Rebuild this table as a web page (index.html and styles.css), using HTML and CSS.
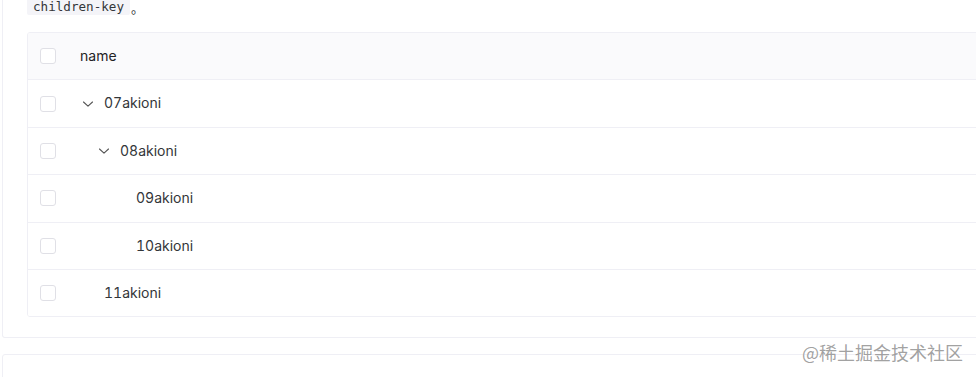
FILE: index.html
```html
<!DOCTYPE html>
<html lang="zh">
<head>
<meta charset="utf-8">
<link rel="stylesheet" href="styles.css">
</head>
<body>
<div class="page">
  <section class="card first">
    <p class="desc"><code class="code">children-key</code><span class="dot">。</span></p>
    <div class="table">
      <div class="row head">
        <div class="cell check"><span class="box"></span></div>
        <div class="cell name">name</div>
      </div>
      <div class="row">
        <div class="cell check"><span class="box"></span></div>
        <div class="cell name"><span class="indent l0"></span><span class="toggle"><svg viewBox="0 0 16 16" width="16" height="16"><path d="M3.5 6 L8 10.2 L12.5 6" fill="none" stroke="#555" stroke-width="1.1" stroke-linecap="round" stroke-linejoin="round"/></svg></span>07akioni</div>
      </div>
      <div class="row">
        <div class="cell check"><span class="box"></span></div>
        <div class="cell name"><span class="indent l1"></span><span class="toggle"><svg viewBox="0 0 16 16" width="16" height="16"><path d="M3.5 6 L8 10.2 L12.5 6" fill="none" stroke="#555" stroke-width="1.1" stroke-linecap="round" stroke-linejoin="round"/></svg></span>08akioni</div>
      </div>
      <div class="row">
        <div class="cell check"><span class="box"></span></div>
        <div class="cell name"><span class="indent l2"></span><span class="toggle"></span>09akioni</div>
      </div>
      <div class="row">
        <div class="cell check"><span class="box"></span></div>
        <div class="cell name"><span class="indent l2"></span><span class="toggle"></span>10akioni</div>
      </div>
      <div class="row last">
        <div class="cell check"><span class="box"></span></div>
        <div class="cell name"><span class="indent l0"></span><span class="toggle"></span>11akioni</div>
      </div>
    </div>
  </section>
  <section class="card second"></section>
  <div class="watermark">@稀土掘金技术社区</div>
</div>
</body>
</html>
```
FILE: styles.css
```css
html, body {
  margin: 0;
  padding: 0;
  background: #fff;
  overflow: hidden;
}
body {
  width: 976px;
  height: 377px;
  font-family: Inter, "Noto Sans", "Noto Sans CJK SC", sans-serif;
  font-size: 14px;
  color: rgb(51, 54, 57);
  font-variant-numeric: tabular-nums;
}
.page {
  position: relative;
  width: 976px;
  height: 377px;
  overflow: hidden;
}
.card {
  margin-left: 2px;
  width: 1100px;
  border: 1px solid #efeff5;
  border-radius: 3px;
  box-sizing: border-box;
}
.card.first {
  border-top: none;
  border-radius: 0 0 3px 3px;
  padding: 0 24px 20px 24px;
}
.card.second {
  margin-top: 16px;
  height: 60px;
}
.desc {
  margin: 0 0 17px 0;
  height: 15px;
  line-height: 15px;
  display: flex;
  align-items: flex-start;
}
.code {
  display: block;
  font-family: "DejaVu Sans Mono", "Liberation Mono", monospace;
  font-size: 12.6px;
  line-height: 14px;
  height: 15px;
  padding: 0 6px 0 6px;
  background: #f4f4f8;
  color: rgb(51, 54, 57);
  border-radius: 0 0 2px 2px;
}
.dot {
  display: block;
  font-family: "Noto Sans CJK SC", sans-serif;
  font-size: 13px;
  line-height: 15px;
  margin-left: 1px;
  color: rgb(51, 54, 57);
}
.table {
  border: 1px solid #efeff5;
  border-radius: 3px;
  overflow: hidden;
}
.row {
  display: flex;
  border-bottom: 1px solid #efeff5;
  background: #fff;
}
.row.last {
  border-bottom: none;
}
.row.head {
  background: #fafafc;
}
.row.head .name {
  font-weight: 400;
  color: rgb(31, 34, 37);
}
.cell {
  padding: 12px;
  line-height: 22.4px;
  display: flex;
  align-items: center;
}
.cell.check {
  width: 16px;
  flex: none;
}
.box {
  width: 16px;
  height: 16px;
  box-sizing: border-box;
  border: 1px solid #e0e0e6;
  border-radius: 3px;
  background: #fff;
}
.cell.name {
  flex: 1;
}
.indent {
  display: inline-block;
  flex: none;
}
.indent.l0 { width: 0; }
.indent.l1 { width: 16px; }
.indent.l2 { width: 32px; }
.toggle {
  display: inline-flex;
  width: 16px;
  height: 16px;
  margin-right: 8px;
  flex: none;
  align-items: center;
  justify-content: center;
}
.toggle svg {
  display: block;
}
.watermark {
  position: absolute;
  left: 802px;
  top: 340px;
  font-family: "Noto Sans CJK SC", sans-serif;
  font-size: 18px;
  line-height: 24px;
  color: rgba(120, 120, 120, 0.7);
  text-shadow: 0 0 1px rgba(255, 255, 255, 0.8);
  white-space: nowrap;
}
```
